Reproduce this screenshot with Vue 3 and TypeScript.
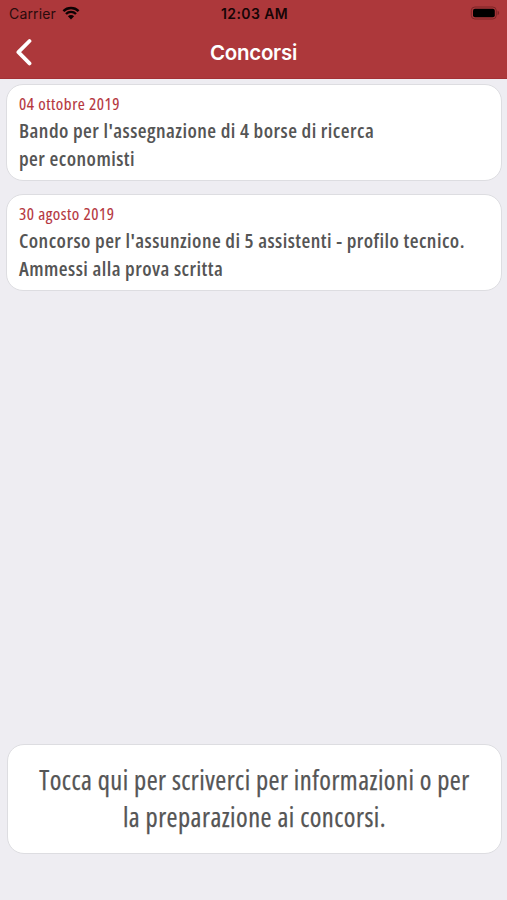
<script setup lang="ts">
interface Contest {
  date: string
  title: string[]
}

const contests: Contest[] = [
  {
    date: '04 ottobre 2019',
    title: ["Bando per l'assegnazione di 4 borse di ricerca", 'per economisti'],
  },
  {
    date: '30 agosto 2019',
    title: ["Concorso per l'assunzione di 5 assistenti - profilo tecnico.", 'Ammessi alla prova scritta'],
  },
]

const contact: string[] = [
  'Tocca qui per scriverci per informazioni o per',
  'la preparazione ai concorsi.',
]
</script>

<template>
  <div class="screen">
    <header class="header">
      <div class="status">
        <div class="carrier">
          <span class="carrier-name">Carrier</span>
          <svg class="wifi" width="18" height="14" viewBox="0 0 18 14" aria-hidden="true">
            <path d="M1.4 5.1a10.8 10.8 0 0 1 15.2 0" />
            <path d="M4 8a7 7 0 0 1 10 0" />
            <path class="solid" d="M9 13.4 5.9 10.2a4.4 4.4 0 0 1 6.2 0z" />
          </svg>
        </div>
        <span class="clock">12:03 AM</span>
        <svg class="battery" width="30" height="14" viewBox="0 0 30 14" aria-hidden="true">
          <rect class="shell" x="1.3" y="1" width="25" height="12" rx="3.6" />
          <rect class="charge" x="3" y="2.8" width="21.8" height="8.4" rx="2" />
          <path class="tip" d="M27.6 4.8v4.4q1.6-.6 1.6-2.2t-1.6-2.2z" />
        </svg>
      </div>
      <nav class="nav">
        <button class="back" aria-label="Indietro">
          <svg width="20" height="28" viewBox="0 0 20 28">
            <path d="M16.5 3 5.4 14.2l11.1 11.2" />
          </svg>
        </button>
        <h1 class="title">Concorsi</h1>
      </nav>
    </header>

    <main class="list">
      <article v-for="c in contests" :key="c.date" class="card">
        <time class="date">{{ c.date }}</time>
        <h2 class="heading">
          <span v-for="l in c.title" :key="l" class="line">{{ l }}</span>
        </h2>
      </article>
    </main>

    <button class="contact">
      <span v-for="l in contact" :key="l" class="line">{{ l }}</span>
    </button>
  </div>
</template>

<style>
body {
  background: #eeedf2;
}
</style>

<style scoped>
.screen {
  box-sizing: border-box;
  display: flex;
  flex-direction: column;
  height: 900px;
  padding-bottom: 46px;
  background: #eeedf2;
  font-family: "Open Sans", "Noto Sans", sans-serif;
  font-stretch: 75%;
}

svg {
  display: block;
}

button {
  margin: 0;
  padding: 0;
  border: 0;
  background: none;
}

.header {
  box-sizing: border-box;
  height: 79px;
  background: #ad383b;
  border-bottom: 1px solid #a33135;
  font-family: Inter, Roboto, sans-serif;
  font-stretch: 100%;
}

.status {
  box-sizing: border-box;
  display: grid;
  grid-template-columns: 1fr auto 1fr;
  align-items: start;
  height: 26px;
  padding: 6px 7px 0 9px;
}

.carrier {
  display: flex;
  gap: 6px;
}

.carrier-name {
  font-size: 14px;
  line-height: 16px;
  letter-spacing: 0.15px;
  color: #2a0b0c;
}

.wifi {
  fill: none;
  stroke: #0d0203;
  stroke-width: 2.4;
}

.wifi .solid {
  fill: #0d0203;
  stroke: none;
}

.clock {
  font-size: 14px;
  font-weight: 600;
  line-height: 16px;
  letter-spacing: 0.4px;
  color: #160506;
}

.battery {
  justify-self: end;
}

.shell {
  fill: none;
  stroke: #7c2427;
  stroke-width: 1;
}

.charge {
  fill: #000;
}

.tip {
  fill: #7c2427;
}

.nav {
  display: grid;
  grid-template-columns: 1fr auto 1fr;
  align-items: center;
  height: 52px;
  padding: 0 13px;
}

.back {
  justify-self: start;
}

.back svg {
  fill: none;
  stroke: #fff;
  stroke-width: 3.8;
  stroke-linecap: round;
  stroke-linejoin: round;
}

.title {
  margin: 0;
  padding-top: 1px;
  font-size: 20.5px;
  font-weight: 600;
  line-height: 26px;
  letter-spacing: -0.3px;
  color: #fff;
}

.list {
  display: flex;
  flex: 1;
  flex-direction: column;
  gap: 13px;
  padding: 5px 5px 0 6px;
}

.card {
  box-sizing: border-box;
  height: 97px;
  padding: 9px 12px;
  background: #fff;
  border: 1px solid #dddde1;
  border-radius: 17px;
}

.date {
  display: block;
  font-size: 17px;
  line-height: 20px;
  letter-spacing: 0.52px;
  color: #b5363d;
  -webkit-text-stroke: 0.1px currentColor;
}

.line {
  display: block;
  white-space: nowrap;
}

.heading {
  margin: 2px 0 0;
  font-size: 20.2px;
  font-weight: 600;
  line-height: 28px;
  letter-spacing: 0.45px;
  color: #555;
}

.contact {
  box-sizing: border-box;
  display: flex;
  flex-direction: column;
  align-items: center;
  height: 110px;
  margin: 0 5px 0 7px;
  padding-top: 17px;
  background: #fff;
  border: 1px solid #dddde1;
  border-radius: 17px;
  color: #555;
  font-family: inherit;
  font-size: 26.5px;
  font-stretch: inherit;
  line-height: 36.5px;
  letter-spacing: 0.47px;
  -webkit-text-stroke: 0.25px currentColor;
}
</style>
